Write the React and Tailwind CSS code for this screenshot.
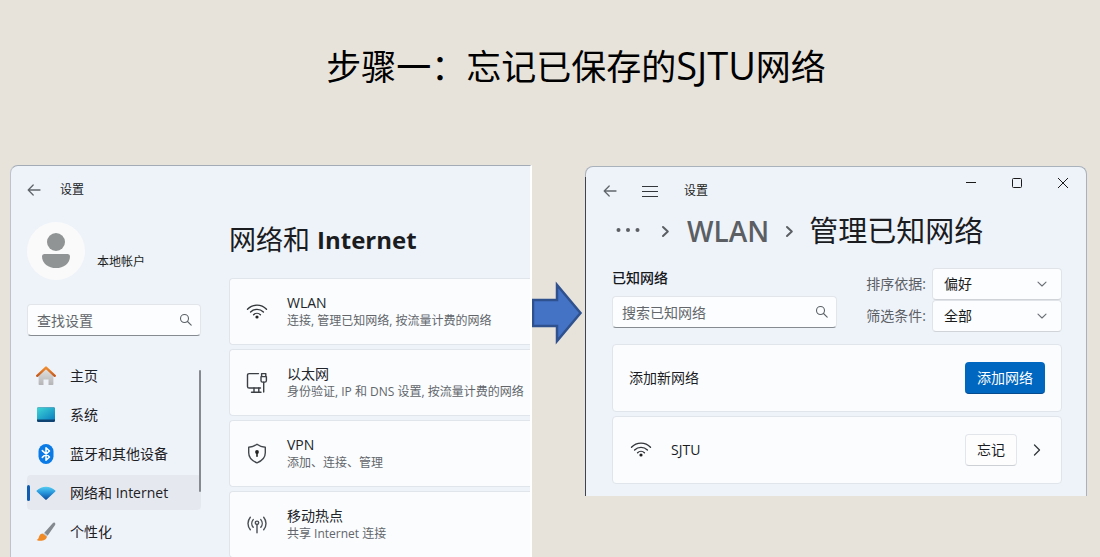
import { useState } from "react";

const navItems = [
  { id: "home", label: "主页", icon: HomeIcon },
  { id: "system", label: "系统", icon: SystemIcon },
  { id: "bluetooth", label: "蓝牙和其他设备", icon: BluetoothIcon },
  { id: "network", label: "网络和 Internet", icon: NetworkIcon },
  { id: "personal", label: "个性化", icon: BrushIcon },
];

const networkCards = [
  { title: "WLAN", text: "连接, 管理已知网络, 按流量计费的网络", icon: WifiIcon },
  { title: "以太网", text: "身份验证, IP 和 DNS 设置, 按流量计费的网络", icon: EthernetIcon },
  { title: "VPN", text: "添加、连接、管理", icon: ShieldIcon },
  { title: "移动热点", text: "共享 Internet 连接", icon: HotspotIcon },
];

function HomeIcon() {
  return (
    <svg width="20" height="20" viewBox="0 0 20 20">
      <defs>
        <linearGradient id="houseWall" x1="0" y1="0" x2="0" y2="1">
          <stop offset="0" stopColor="#e4e4e4" />
          <stop offset="1" stopColor="#b4b4b6" />
        </linearGradient>
        <linearGradient id="houseRoof" x1="0" y1="0" x2="0" y2="1">
          <stop offset="0" stopColor="#f08c2e" />
          <stop offset="1" stopColor="#c65a1c" />
        </linearGradient>
      </defs>
      <path d="M2.600 8.600 10 2l7.400 6.600v9.600a.8.8 0 0 1-.8.8H12.500v-5.600h-5V19H3.400a.8.8 0 0 1-.8-.8z" fill="url(#houseWall)" />
      <path d="M1.200 9.800 10 1.600l8.800 8.200" fill="none" stroke="url(#houseRoof)" strokeWidth="2.400" strokeLinecap="round" strokeLinejoin="round" />
    </svg>
  );
}

function SystemIcon() {
  return (
    <svg width="20" height="20" viewBox="0 0 20 20">
      <defs>
        <linearGradient id="screen" x1="0" y1="0" x2="1" y2="1">
          <stop offset="0" stopColor="#3fd6d6" />
          <stop offset="1" stopColor="#0b7fc0" />
        </linearGradient>
      </defs>
      <rect x="1" y="2.500" width="18" height="14.500" rx="1.200" fill="#0d4273" />
      <path d="M1 3.700A1.200 1.200 0 0 1 2.200 2.500h15.600A1.200 1.200 0 0 1 19 3.700V14.500H1z" fill="url(#screen)" />
    </svg>
  );
}

function BluetoothIcon() {
  return (
    <svg width="20" height="20" viewBox="0 0 20 20">
      <rect x="2.500" y="0" width="15" height="20" rx="7.500" fill="#0a7be6" />
      <path d="m6.300 6.600 7.200 6.400-3.500 3.300V3.700L13.500 7l-7.200 6.400" fill="none" stroke="#fff" strokeWidth="1.500" strokeLinejoin="round" strokeLinecap="round" />
    </svg>
  );
}

function NetworkIcon() {
  return (
    <svg width="20" height="20" viewBox="0 0 20 20">
      <defs>
        <linearGradient id="fan" x1="0" y1="0" x2="0" y2="1">
          <stop offset="0" stopColor="#56cdf2" />
          <stop offset="0.450" stopColor="#2796dc" />
          <stop offset="1" stopColor="#0c4a9c" />
        </linearGradient>
      </defs>
      <path d="M.7 7.600C5.600 2.400 14.400 2.400 19.300 7.600c.3.300.3.700 0 1L10.700 16.600a1 1 0 0 1-1.400 0L.7 8.600a.7.7 0 0 1 0-1z" fill="url(#fan)" />
    </svg>
  );
}

function BrushIcon() {
  return (
    <svg width="20" height="20" viewBox="0 0 20 20">
      <path d="M18.900.9c.7.6.5 1.500 0 2.300l-7.300 10.500-3.300-2.900L16.700 1.300c.7-.7 1.500-1 2.200-.4z" fill="#84898f" />
      <path d="m8.300 10.800 3.300 2.900-1.300 1.500-3.400-3z" fill="#c9cdd2" />
      <path d="M6.700 11.400c-2.900.3-3.500 2.700-3.900 4.200-.3 1-1 1.900-2.200 2.300 3.300 1.800 9.700 1.200 10.300-3.100z" fill="#f08a26" />
    </svg>
  );
}

function WifiIcon() {
  return (
    <svg width="22" height="20" viewBox="0 0 22 20" fill="none" stroke="#33363a" strokeWidth="1.400" strokeLinecap="round">
      <path d="M1.500 7.200a13.200 13.200 0 0 1 19 0" />
      <path d="M4.600 10a9 9 0 0 1 12.800 0" />
      <path d="M7.600 12.700a4.900 4.900 0 0 1 6.800 0" />
      <circle cx="11" cy="15" r="1.600" fill="#222" stroke="none" />
    </svg>
  );
}

function EthernetIcon() {
  return (
    <svg width="22" height="22" viewBox="0 0 22 22" fill="none" stroke="#3b3f44" strokeWidth="1.400" strokeLinecap="round" strokeLinejoin="round">
      <path d="M12.500 1.600H3.200C2 1.600 1.500 2.100 1.500 3.200v11.200c0 1.100.5 1.600 1.700 1.600h11.300" />
      <path d="M8 16v4M12.800 16v4M5.500 20.200h9.500" />
      <path d="M15 4.600h5.400v3.900c0 1-.7 1.600-1.600 1.600h-2.200c-.9 0-1.600-.6-1.600-1.600zM15.600 4.600v-3h4.200v3" />
      <path d="M17.700 10.200v9.800" />
    </svg>
  );
}

function ShieldIcon() {
  return (
    <svg width="22" height="22" viewBox="0 0 22 22" fill="none" stroke="#44484d" strokeWidth="1.400" strokeLinejoin="round">
      <path d="M11 1.200c2.400 1.900 5 2.800 8.300 3v5.600c0 4.800-3 8-8.300 10-5.300-2-8.300-5.200-8.300-10V4.200c3.300-.2 5.900-1.100 8.300-3z" />
      <circle cx="11" cy="9" r="1.900" fill="#222" stroke="none" />
      <path d="M11 9v4.300" stroke="#222" strokeWidth="1.600" strokeLinecap="round" />
    </svg>
  );
}

function HotspotIcon() {
  return (
    <svg width="22" height="22" viewBox="0 0 22 22" fill="none" stroke="#4a4e53" strokeWidth="1.400" strokeLinecap="round">
      <path d="M4.300 3.200a9.800 9.800 0 0 0 0 12.600M17.700 3.200a9.800 9.800 0 0 1 0 12.600" />
      <path d="M7.200 5.600a5.800 5.800 0 0 0 0 7.600M14.800 5.600a5.800 5.800 0 0 1 0 7.600" />
      <circle cx="11" cy="8.800" r="1.700" />
      <path d="M11 10.800v8" />
    </svg>
  );
}

function SearchIcon() {
  return (
    <svg width="14" height="14" viewBox="0 0 14 14" fill="none" stroke="#5c6167" strokeWidth="1.100" strokeLinecap="round">
      <circle cx="5.500" cy="5.500" r="4" />
      <path d="m8.500 8.500 3.700 3.700" />
    </svg>
  );
}

function BackIcon() {
  return (
    <svg width="14" height="14" viewBox="0 0 14 14" fill="none" stroke="#62676d" strokeWidth="1.300" strokeLinecap="round" strokeLinejoin="round">
      <path d="M13 7H1.200M6.200 2 1.200 7l5 5" />
    </svg>
  );
}

function Crumb() {
  return (
    <svg width="9" height="14" viewBox="0 0 9 14" fill="none" stroke="#5b5f64" strokeWidth="2" strokeLinecap="round" strokeLinejoin="round">
      <path d="M2 3l4.800 4.500L2 12" />
    </svg>
  );
}

function SearchBox({ label }) {
  const [value, setValue] = useState("");

  return (
    <div className="relative">
      <input
        type="text"
        aria-label={label}
        value={value}
        onChange={(e) => setValue(e.target.value)}
        placeholder={label}
        className="block h-8 w-full rounded border border-[#e2e5ea] border-b-[#868b92] bg-[#fbfdfe] pr-8 pl-[9px] text-sm text-[#1b1b1b] outline-none placeholder:text-[#63676c]"
      />
      <span className="pointer-events-none absolute inset-y-0 right-2 flex items-center">
        <SearchIcon />
      </span>
    </div>
  );
}

function FilterSelect({ id, label, options }) {
  return (
    <div className="flex items-center gap-[6px]">
      <label htmlFor={id} className="text-sm text-[#5c6065]">{label}</label>
      <div className="relative w-[130px]">
        <select
          id={id}
          className="block h-8 w-full appearance-none rounded border border-[#e0e4e9] border-b-[#d0d4d9] bg-[#fbfdfe] px-[11px] text-sm text-[#1a1a1a] outline-none"
        >
          {options.map((option) => (
            <option key={option}>{option}</option>
          ))}
        </select>
        <svg className="pointer-events-none absolute top-[11px] right-[15px]" width="10" height="10" viewBox="0 0 10 10" fill="none" stroke="#6b6f75" strokeWidth="1.100" strokeLinecap="round" strokeLinejoin="round">
          <path d="M1 3.200 5 7l4-3.800" />
        </svg>
      </div>
    </div>
  );
}

function SettingsWindow() {
  const [active, setActive] = useState("network");

  return (
    <section className="relative h-full overflow-hidden rounded-tl-lg border-t border-r-2 border-l border-t-[#a3abb6] border-r-white border-l-[#bcc3cc] bg-[#eef3fa] pl-4">
      <span className="absolute top-[45px] bottom-0 -left-px w-px bg-[#3d4552]" />

      <header className="flex h-12 items-center gap-[19px]">
        <button type="button" aria-label="返回">
          <BackIcon />
        </button>
        <span className="text-xs text-[#202327]">设置</span>
      </header>

      <div className="flex gap-7">
        <aside className="w-[174px] shrink-0 pt-2">
          <div className="flex items-center gap-3">
            <span className="flex size-[58px] items-center justify-center rounded-full bg-[#fafafa]">
              <svg width="28" height="36" viewBox="0 0 28 36" fill="#919494">
                <circle cx="14" cy="9" r="9" />
                <path d="M2.500 21h23c1.400 0 2.500 1 2.500 2.400C28 30.500 21.500 35 14 35S0 30.500 0 23.400C0 22 1.100 21 2.500 21z" />
              </svg>
            </span>
            <span className="pt-[22px] text-xs text-[#1b1d20]">本地帐户</span>
          </div>

          <div className="mt-6">
            <SearchBox label="查找设置" />
          </div>

          <nav className="relative mt-[22px] flex flex-col gap-1">
            {navItems.map(({ id, label, icon: Icon }) => (
              <a
                key={id}
                href={`#${id}`}
                onClick={() => setActive(id)}
                className={`flex h-[35px] items-center rounded ${
                  active === id ? "bg-[#e5e9ef]" : ""
                }`}
              >
                <span className={`mr-[6px] h-4 w-[3px] rounded-full ${active === id ? "bg-[#0f5cb0]" : ""}`} />
                <Icon />
                <span className="ml-[14px] text-sm text-[#1d2024]">{label}</span>
              </a>
            ))}
            <span className="absolute top-3 right-0 h-[122px] w-[2px] rounded-full bg-[#868a90]" />
          </nav>
        </aside>

        <div className="min-w-0 flex-1">
          <h2 className="flex h-[52px] items-center text-[27px] whitespace-pre text-[#1a1c1f]">
            网络和 <span className="text-2xl font-bold">Internet</span>
          </h2>
          <div className="mt-3 flex flex-col gap-1">
            {networkCards.map(({ title, text, icon: Icon }) => (
              <div
                key={title}
                className="flex h-[67px] items-center rounded-l border border-r-0 border-[#e0e5eb] bg-[#fafcfe] pl-4"
              >
                <span className="flex w-[22px] justify-center">
                  <Icon />
                </span>
                <div className="ml-[19px] whitespace-nowrap">
                  <h3 className="text-sm leading-[18px] text-[#222529]">{title}</h3>
                  <p className="text-xs leading-[18px] text-[#62666b]">{text}</p>
                </div>
              </div>
            ))}
          </div>
        </div>
      </div>
    </section>
  );
}

function KnownNetworksWindow() {
  return (
    <section className="relative mt-px rounded-t-lg border-x border-t border-[#a9b1bb] bg-[#eef3fa] pb-3">
      <span className="absolute top-[10px] bottom-0 -left-px w-px bg-[#3d4552]" />

      <header className="flex h-12 items-center pl-[17px]">
        <button type="button" aria-label="返回">
          <BackIcon />
        </button>
        <button type="button" aria-label="菜单" className="ml-[25px]">
          <svg width="16" height="12" viewBox="0 0 16 12" stroke="#33373c">
            <path d="M0 1.500h16M0 6.500h16M0 11.500h16" />
          </svg>
        </button>
        <span className="ml-[26px] text-xs text-[#1b1d20]">设置</span>
        <div className="mr-[17px] mb-4 ml-auto flex gap-[34px] text-[#1a1a1a]">
          <button type="button" aria-label="最小化">
            <svg width="12" height="12" viewBox="0 0 12 12" stroke="currentColor">
              <path d="M1 5.500h10" />
            </svg>
          </button>
          <button type="button" aria-label="最大化">
            <svg width="12" height="12" viewBox="0 0 12 12" fill="none" stroke="currentColor">
              <rect x="1.500" y="1.500" width="9" height="9" rx="1" />
            </svg>
          </button>
          <button type="button" aria-label="关闭">
            <svg width="12" height="12" viewBox="0 0 12 12" stroke="currentColor">
              <path d="m1 1 10 10M11 1 1 11" />
            </svg>
          </button>
        </div>
      </header>

      <div className="pr-6 pl-[26px]">
        <div className="flex h-8 items-center text-[29px] text-[#1a1c1f]">
          <svg className="ml-1" width="24" height="6" viewBox="0 0 24 6" fill="#5b5f64">
            <circle cx="2.500" cy="2" r="2" />
            <circle cx="12" cy="2" r="2" />
            <circle cx="21.500" cy="2" r="2" />
          </svg>
          <span className="mr-[17px] ml-[21px] flex"><Crumb /></span>
          <a href="#wlan" className="text-[28px] font-semibold text-[#5b5f64]">WLAN</a>
          <span className="mr-[15px] ml-4 flex"><Crumb /></span>
          <h2>管理已知网络</h2>
        </div>

        <div className="mt-[21px] flex items-start justify-between">
          <div className="w-[225px]">
            <h3 className="text-sm font-medium text-[#15171a]">已知网络</h3>
            <div className="mt-2">
              <SearchBox label="搜索已知网络" />
            </div>
          </div>
          <div className="flex flex-col">
            <FilterSelect id="sort-by" label="排序依据:" options={["偏好", "名称"]} />
            <FilterSelect id="filter-by" label="筛选条件:" options={["全部", "自动连接"]} />
          </div>
        </div>

        <div className="mt-3 flex flex-col gap-1">
          <div className="flex h-[68px] items-center justify-between rounded border border-[#e0e5eb] bg-[#fafcfe] px-4 text-sm text-[#1a1c1f]">
            <span>添加新网络</span>
            <button type="button" className="h-8 w-20 rounded border-b border-[#064b8e] bg-[#0067c0] text-white">
              添加网络
            </button>
          </div>
          <div className="flex h-[68px] items-center rounded border border-[#e0e5eb] bg-[#fafcfe] pl-[17px] text-sm text-[#1a1c1f]">
            <WifiIcon />
            <span className="ml-[19px]">SJTU</span>
            <button type="button" className="ml-auto h-8 w-[52px] rounded border border-[#e2e5ea] border-b-[#cdd1d6] bg-[#fdfdfe]">
              忘记
            </button>
            <button type="button" aria-label="SJTU 属性" className="mr-5 ml-4">
              <svg width="8" height="12" viewBox="0 0 8 12" fill="none" stroke="#33363a" strokeWidth="1.300" strokeLinecap="round" strokeLinejoin="round">
                <path d="m1.500 1 5 5-5 5" />
              </svg>
            </button>
          </div>
        </div>
      </div>
    </section>
  );
}

export default function App() {
  return (
    <div className="flex h-screen flex-col overflow-hidden bg-[#e7e3db] font-['Open_Sans','Noto_Sans_CJK_SC',sans-serif]">
      <h1 className="mt-10 mb-[71px] pl-[52px] text-center text-[35px] leading-[54px] text-black">
        步骤一：忘记已保存的<span className="text-[38px] leading-none">SJTU</span>网络
      </h1>
      <main className="grid min-h-0 flex-1 grid-cols-[minmax(0,522fr)_53px_minmax(0,502fr)] grid-rows-[minmax(0,1fr)] items-start pr-[13px] pl-[10px]">
        <SettingsWindow />
        <svg className="mt-[116px]" width="52" height="64" viewBox="0 0 52 64">
          <path d="M1 19h24V4l23.500 28L25 60V45H1z" fill="#4472c4" stroke="#2f528f" strokeWidth="2.500" />
        </svg>
        <KnownNetworksWindow />
      </main>
    </div>
  );
}
